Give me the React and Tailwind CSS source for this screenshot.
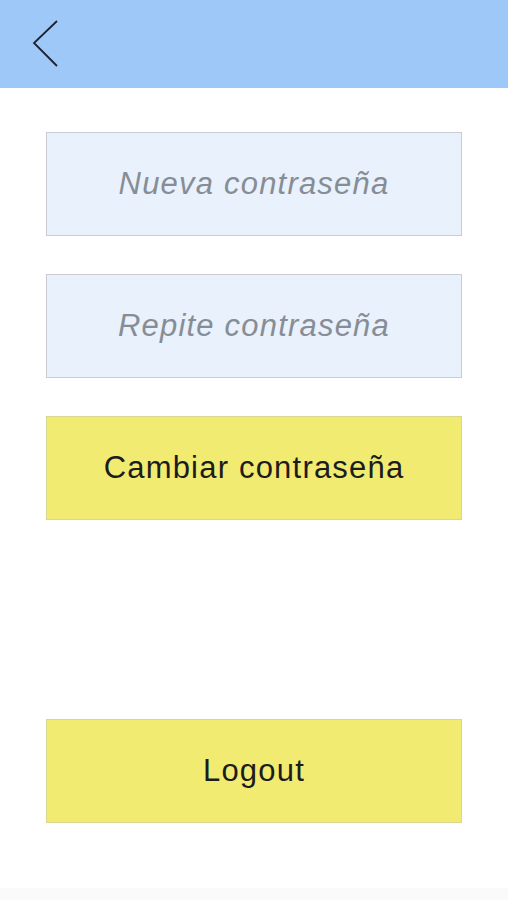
import { useState } from "react";

function Campo({ placeholder, value, onChange }) {
  return (
    <input
      type="password"
      value={value}
      onChange={onChange}
      placeholder={placeholder}
      className="h-[104px] w-full border border-[#c9cdd3] bg-[#e8f1fc] text-center text-[31px] tracking-[1.2px] italic text-[#3a3f46] placeholder:text-[#878d95] outline-none"
    />
  );
}

function Boton({ children, onClick }) {
  return (
    <button
      onClick={onClick}
      className="h-[104px] w-full border border-[#d9d68f] bg-[#f2eb72] text-[31px] tracking-[1.2px] text-[#1c1c1c]"
    >
      {children}
    </button>
  );
}

export default function App() {
  const [nueva, setNueva] = useState("");
  const [repite, setRepite] = useState("");

  return (
    <div
      className="flex h-[900px] w-[508px] flex-col bg-white"
      style={{ fontFamily: '"Liberation Sans", Arial, sans-serif' }}
    >
      <header className="flex h-[88px] shrink-0 items-center bg-[#9ec8f7] pl-[31px]">
        <button aria-label="Volver">
          <svg width="30" height="50" viewBox="0 0 30 50" fill="none">
            <path d="M26 2 L3 24 L26 47" stroke="#1b2230" strokeWidth="1.8" />
          </svg>
        </button>
      </header>

      <main className="flex flex-1 flex-col px-[46px] pt-[44px]">
        <div className="flex flex-col gap-[38px]">
          <Campo placeholder="Nueva contraseña" value={nueva} onChange={(e) => setNueva(e.target.value)} />
          <Campo placeholder="Repite contraseña" value={repite} onChange={(e) => setRepite(e.target.value)} />
          <Boton>Cambiar contraseña</Boton>
        </div>

        <div className="mt-[199px]">
          <Boton>Logout</Boton>
        </div>
      </main>

      <div className="h-[12px] shrink-0 bg-[#fafafa]" />
    </div>
  );
}
